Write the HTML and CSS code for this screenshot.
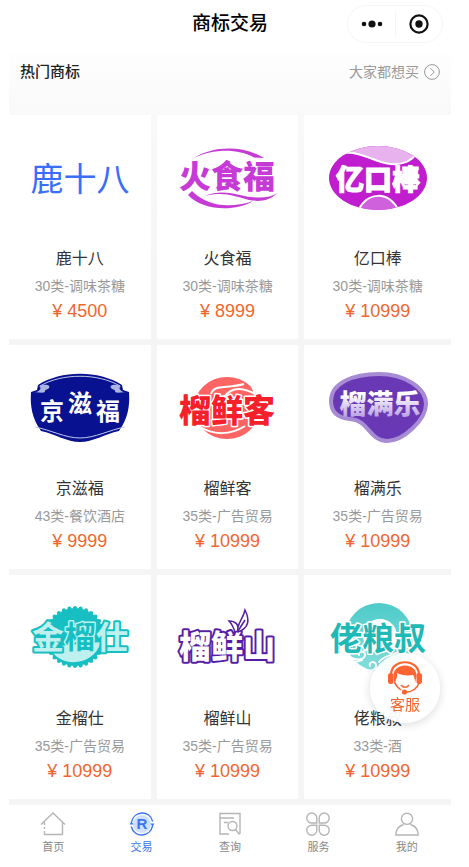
FILE: index.html
```html
<!DOCTYPE html>
<html lang="zh-CN">
  <head>
    <meta charset="UTF-8" />
    <meta name="viewport" content="width=device-width, initial-scale=1.0" />
    <title>商标交易</title>
    <link rel="stylesheet" href="styles.css">
  </head>
  <body>
    <div class="app">
      <header class="topbar">
        <h1>商标交易</h1>
        <div class="capsule">
          <button type="button" aria-label="更多">
            <svg width="24" height="24" viewBox="0 0 24 24" fill="#111">
              <circle cx="4" cy="12" r="2.3" /><circle cx="12" cy="12" r="3.6" /><circle cx="20" cy="12" r="2.3" />
            </svg>
          </button>
          <button type="button" aria-label="关闭">
            <svg width="24" height="24" viewBox="0 0 24 24">
              <circle cx="12" cy="12" r="8.6" fill="none" stroke="#111" stroke-width="2.2" />
              <circle cx="12" cy="12" r="3.7" fill="#111" />
            </svg>
          </button>
        </div>
      </header>

      <main class="market">
        <div class="section-head">
          <h2>热门商标</h2>
          <a href="#" class="more">
            大家都想买
            <svg width="16" height="16" viewBox="0 0 16 16" fill="none" stroke="#999">
              <circle cx="8" cy="8" r="7.4" /><path d="M6.3 4.2 10.3 8l-4 3.8" />
            </svg>
          </a>
        </div>

        <div class="grid">
          <a href="#" class="card">
            <svg class="logo" viewBox="0 0 98 98">
              <text class="mark regular" x="49" y="61" font-size="33" fill="#3a6ef5">鹿十八</text>
            </svg>
            <h3>鹿十八</h3>
            <p class="type">30类-调味茶糖</p>
            <p class="price">¥ 4500</p>
          </a>

          <a href="#" class="card">
            <svg class="logo" viewBox="0 0 98 98">
              <g fill="#c63bd6">
                <path d="M15 28C34 16 64 15 85 28L75 27.5C58 18 34 19 15 28Z" />
                <path d="M13 61C28 76 50 79 74 71C56 82 24 81 9 65Z" />
                <path d="M26 66C44 58 60 66 72 67C83 68 91 68 98 63C91 71 80 72 70 70C57 67 45 61 26 66Z" />
              </g>
              <text class="mark heavy" x="48" y="58" font-size="32" fill="#c63bd6">火食福</text>
            </svg>
            <h3>火食福</h3>
            <p class="type">30类-调味茶糖</p>
            <p class="price">¥ 8999</p>
          </a>

          <a href="#" class="card">
            <svg class="logo" viewBox="0 0 98 98">
              <clipPath id="oval"><ellipse cx="49" cy="48" rx="49" ry="32" /></clipPath>
              <g clip-path="url(#oval)">
                <rect width="98" height="98" fill="#bf1dce" />
                <path d="M14 23C34 21 46 33 62 34C74 35 82 32 88 23L88 10H14Z" fill="#e8b2ee" stroke="#fff" stroke-width="2" />
                <path d="M29 82C36 61 62 60 70 82Z" fill="#d061dc" stroke="#fff" stroke-width="2" />
              </g>
              <text class="mark heavy thick" x="49" y="60" font-size="28" fill="#fff" stroke="#fff">亿口棒</text>
            </svg>
            <h3>亿口棒</h3>
            <p class="type">30类-调味茶糖</p>
            <p class="price">¥ 10999</p>
          </a>

          <a href="#" class="card">
            <svg class="logo" viewBox="0 0 98 98">
              <path d="M7 25C30 10 68 10 91 25L92 30L98 32C99 46 97 58 88 71C74 74 62 82 49 82C36 82 24 74 10 71C1 58-1 46 0 32L6 30Z" fill="#08118f" />
              <g fill="none" stroke="#c3c8ee">
                <path d="M9 26C31 13 67 13 89 26" />
                <path d="M4 67C20 70 34 78 49 78C64 78 78 70 94 67" />
              </g>
              <path d="M8 26C13 24 20 24 18 28C17 30 13 29 14 32C11 34 5 31 2 33C7 32 12 29 8 26Z" fill="#aeb5e3" />
              <path d="M90 26C85 24 78 24 80 28C81 30 85 29 84 32C87 34 93 31 96 33C91 32 86 29 90 26Z" fill="#aeb5e3" />
              <g fill="#fff" font-size="24">
                <text class="mark" x="21" y="60">京</text>
                <text class="mark" x="49" y="52">滋</text>
                <text class="mark" x="77" y="60">福</text>
              </g>
            </svg>
            <h3>京滋福</h3>
            <p class="type">43类-餐饮酒店</p>
            <p class="price">¥ 9999</p>
          </a>

          <a href="#" class="card">
            <svg class="logo" viewBox="0 0 98 98">
              <ellipse cx="48" cy="48" rx="33" ry="31" fill="#fd6564" />
              <g fill="none" stroke="#fff" stroke-width="2">
                <path d="M63 15C69 20 74 26 76 34" />
                <path d="M32 34C35 24 48 29 65 24" />
                <path d="M45 37C54 25 66 28 80 36" />
                <path d="M20 66C34 76 52 75 66 66" />
              </g>
              <text class="mark heavy slant outlined" x="48" y="62" font-size="32" fill="#f5202a" stroke="#fff" stroke-width="3">榴鲜客</text>
            </svg>
            <h3>榴鲜客</h3>
            <p class="type">35类-广告贸易</p>
            <p class="price">¥ 10999</p>
          </a>

          <a href="#" class="card">
            <svg class="logo" viewBox="0 0 98 98">
              <linearGradient id="fade" x1="0" y1="0" x2="0" y2="1">
                <stop offset=".3" stop-color="#fff" /><stop offset="1" stop-color="#a98bdc" />
              </linearGradient>
              <path d="M2 41C2 23 24 14 50 14C76 14 97 28 97 44C97 60 74 81 58 81C40 81 40 60 21 59C10 58 2 53 2 41Z" fill="#6938b5" stroke="#a78bd5" stroke-width="4" />
              <text class="mark heavy" x="51" y="54" font-size="27" fill="url(#fade)">榴满乐</text>
            </svg>
            <h3>榴满乐</h3>
            <p class="type">35类-广告贸易</p>
            <p class="price">¥ 10999</p>
          </a>

          <a href="#" class="card">
            <svg class="logo" viewBox="0 0 98 98">
              <circle cx="44" cy="47" r="29" fill="#17bfc2" />
              <circle cx="44" cy="47" r="29" fill="none" stroke="#17bfc2" stroke-width="4" stroke-linecap="round" pathLength="64" stroke-dasharray="0 2" />
              <path d="M19 57C26 78 62 78 70 52Z" fill="#bdf0ee" />
              <g class="outlined" font-size="32" fill="#bdf0ee" stroke="#17bfc2" stroke-width="4">
                <text class="mark" x="17" y="59">金</text>
                <text class="mark" x="81" y="59">仕</text>
              </g>
              <text class="mark outlined" x="49" y="58" font-size="31" fill="#17bfc2" stroke="#bdf0ee" stroke-width="3">榴</text>
            </svg>
            <h3>金榴仕</h3>
            <p class="type">35类-广告贸易</p>
            <p class="price">¥ 10999</p>
          </a>

          <a href="#" class="card">
            <svg class="logo" viewBox="0 0 98 98">
              <text class="mark heavy slant outlined" x="48" y="68" font-size="32" fill="#fff" stroke="#571ea6" stroke-width="4">榴鲜山</text>
              <g fill="#fff" stroke="#571ea6" stroke-width="1.5">
                <path d="M56 42C54 36 52 33 50 31C56 31 60 34 59 41Z" />
                <path d="M59 42C57 34 64 30 66 20C71 30 70 38 59 42Z" />
                <path d="M59 41L66 30" />
              </g>
            </svg>
            <h3>榴鲜山</h3>
            <p class="type">35类-广告贸易</p>
            <p class="price">¥ 10999</p>
          </a>

          <a href="#" class="card">
            <svg class="logo" viewBox="0 0 98 98">
              <linearGradient id="sea" x1="0" y1="0" x2="0" y2="1">
                <stop offset="0" stop-color="#4ecbc9" /><stop offset="1" stop-color="#83dedb" />
              </linearGradient>
              <circle cx="50" cy="47" r="34" fill="url(#sea)" />
              <circle cx="51" cy="46" r="17" fill="#fff" />
              <g fill="none" stroke="#fff" stroke-width="2" stroke-linecap="round">
                <path d="M17 64C25 72 36 70 36 65C36 60 29 61 30 65" />
                <path d="M22 71C28 73 30 71 33 70" />
                <path d="M30 79C40 83 48 80 47 75C46 70 39 72 41 76" />
                <path d="M50 72C56 64 66 66 72 60" />
              </g>
              <text class="mark outlined" x="49" y="60" font-size="32" fill="#1fb9b6" stroke="#fff" stroke-width="3">佬粮叔</text>
            </svg>
            <h3>佬粮叔</h3>
            <p class="type">33类-酒</p>
            <p class="price">¥ 10999</p>
          </a>
        </div>
      </main>

      <nav class="tabbar">
        <a href="#">
          <svg width="26" height="24" viewBox="0 0 26 24">
            <path d="M1 12.5 13 1l12 11.5M4.500 10v3M4.500 15v2M4.500 19v3.500h18V10" />
          </svg>
          首页
        </a>
        <a href="#" class="active">
          <svg width="26" height="24" viewBox="0 0 26 24">
            <circle class="disc" cx="13" cy="12" r="9" />
            <path d="M2.300 14.500C5 26 21 26 23.700 13.500M23.700 9.500C21-2 5-2 2.300 10.500" />
            <path class="arrow" d="M.5 12.500 2.500 9.500 4.500 12.500ZM21.500 11.500 23.500 14.500 25.500 11.500Z" />
            <text x="13" y="17">R</text>
          </svg>
          交易
        </a>
        <a href="#">
          <svg width="26" height="24" viewBox="0 0 26 24">
            <path d="M12 22H3V1.500h20V22M3 6h14M7 10.500h4" />
            <circle cx="15.500" cy="14" r="4.500" /><path d="m18.500 17.500 4 5" />
          </svg>
          查询
        </a>
        <a href="#">
          <svg width="26" height="24" viewBox="0 0 26 24">
            <path d="M11.800 11H7A5 5 0 1 1 11.800 6ZM14.200 11H19A5 5 0 1 0 14.200 6ZM11.800 13.200H7A5 5 0 1 0 11.800 18.200ZM14.200 13.200H19A5 5 0 1 1 14.200 18.200Z" />
          </svg>
          服务
        </a>
        <a href="#">
          <svg width="26" height="24" viewBox="0 0 26 24">
            <circle cx="13" cy="6.800" r="5.600" />
            <path d="M9.500 12.500C4.500 14 2 18 1.800 23H24.200C24 18 21.500 14 16.500 12.500" />
          </svg>
          我的
        </a>
      </nav>

      <button type="button" class="service">
        <svg width="36" height="34" viewBox="0 0 36 34">
          <path d="M4 14C4-3 32-3 32 14" fill="none" stroke="#fc6431" stroke-width="2.2" />
          <path d="M6.500 15C6 1 30 1 29.500 15L28 22C28 18 27 15 26 14C19 15 14 14 10 12C11 17 8 18 8 24C7 21 6.500 18 6.500 15Z" fill="#fc6431" />
          <rect x="1" y="12" width="5.5" height="11" rx="2.5" fill="#fc6431" />
          <rect x="29.5" y="12" width="5.5" height="11" rx="2.5" fill="#fc6431" />
          <path d="M32 22C30 28 25 31 18 31.500M7.500 21C9 25 11 27 14 29M14 24C16 27 20 27 22 24" fill="none" stroke="#fc6431" stroke-width="1.5" />
          <circle cx="17.5" cy="31" r="2.6" fill="#fc6431" />
        </svg>
        客服
      </button>
    </div>
  </body>
</html>
```

FILE: styles.css
```css
* {
  box-sizing: border-box;
}

:root {
  --main-color: #3b76f0;
  --price-color: #f1662f;
  --page-bg: #f5f5f5;
}

body {
  margin: 0;
  background: #fff;
  font-family: "Liberation Sans", "Noto Sans CJK SC", sans-serif;
}

h1, h2, h3, p {
  margin: 0;
}

a {
  color: inherit;
  text-decoration: none;
}

button {
  padding: 0;
  border: none;
  background: none;
  font-family: inherit;
  cursor: pointer;
}

.app {
  display: flex;
  flex-direction: column;
  min-height: 100vh;
  padding: 0 18px 0 9px;
}

/* title bar */
.topbar {
  display: grid;
  grid-template-columns: 1fr auto 1fr;
  align-items: center;
  padding: 5px 0 10px;
}

.topbar h1 {
  grid-column: 2;
  font-size: 19px;
  font-weight: 500;
  line-height: 24px;
  color: #000;
}

.capsule {
  display: flex;
  justify-self: end;
  margin-right: 8px;
  border: 1px solid #f5f5f5;
  border-radius: 19px;
  padding: 6px 0;
}

.capsule button {
  display: flex;
  justify-content: center;
  width: 47px;
}

.capsule button + button {
  border-left: 1px solid #f5f5f5;
}

.capsule svg {
  display: block;
}

/* trademark list */
.market {
  flex: 1;
  padding-bottom: 6px;
  background: linear-gradient(#fefefe, #f9f9f9 60px, var(--page-bg) 240px);
}

.section-head {
  display: flex;
  justify-content: space-between;
  align-items: center;
  height: 38px;
  margin-bottom: 24px;
  padding: 0 11px;
}

.section-head h2 {
  font-size: 15px;
  font-weight: 500;
  line-height: 20px;
  color: #222;
}

.more {
  display: flex;
  align-items: center;
  gap: 5px;
  font-size: 14px;
  line-height: 20px;
  color: #999;
}

.grid {
  display: grid;
  grid-template-columns: 29fr 29fr 30fr;
  gap: 6px;
}

.card {
  display: flex;
  flex-direction: column;
  align-items: center;
  padding: 15px 0 18px;
  background: #fff;
  line-height: 20px;
}

.logo {
  width: 98px;
  height: 98px;
  margin-bottom: 21px;
  overflow: visible;
}

.mark {
  font-family: "Noto Sans CJK SC", sans-serif;
  font-weight: 700;
  text-anchor: middle;
}

.regular {
  font-weight: 400;
}

.heavy {
  font-weight: 900;
}

.thick {
  stroke-width: 1;
}

.slant {
  font-style: oblique 8deg;
}

.outlined {
  paint-order: stroke;
  stroke-linejoin: round;
}

.card h3 {
  margin-bottom: 7px;
  font-size: 16px;
  font-weight: 400;
  color: #333;
}

.type {
  margin-bottom: 5px;
  font-size: 14px;
  color: #999;
}

.price {
  font-size: 18px;
  color: var(--price-color);
}

/* bottom tabs */
.tabbar {
  display: grid;
  grid-template-columns: repeat(5, 1fr);
  padding: 7px 0 12px;
}

.tabbar a {
  display: flex;
  flex-direction: column;
  align-items: center;
  gap: 3px;
  font-size: 11px;
  line-height: 16px;
  color: #888;
}

.tabbar svg {
  fill: none;
  stroke: #b5b5b5;
  stroke-width: 1.4;
}

.tabbar .active {
  color: var(--main-color);
}

.tabbar .active svg {
  stroke: var(--main-color);
}

.tabbar .disc {
  fill: #cfdffc;
  stroke: none;
}

.tabbar .arrow {
  fill: var(--main-color);
  stroke: none;
}

.tabbar text {
  fill: var(--main-color);
  stroke: none;
  font-size: 15px;
  font-weight: 700;
  text-anchor: middle;
}

/* floating customer service button */
.service {
  position: fixed;
  right: 29px;
  bottom: 144px;
  display: flex;
  flex-direction: column;
  align-items: center;
  justify-content: center;
  width: 70px;
  height: 70px;
  border-radius: 50%;
  background: rgba(255, 255, 255, 0.94);
  box-shadow: 0 2px 10px rgba(0, 0, 0, 0.14);
  font-size: 15px;
  line-height: 20px;
  color: var(--price-color);
}
```
